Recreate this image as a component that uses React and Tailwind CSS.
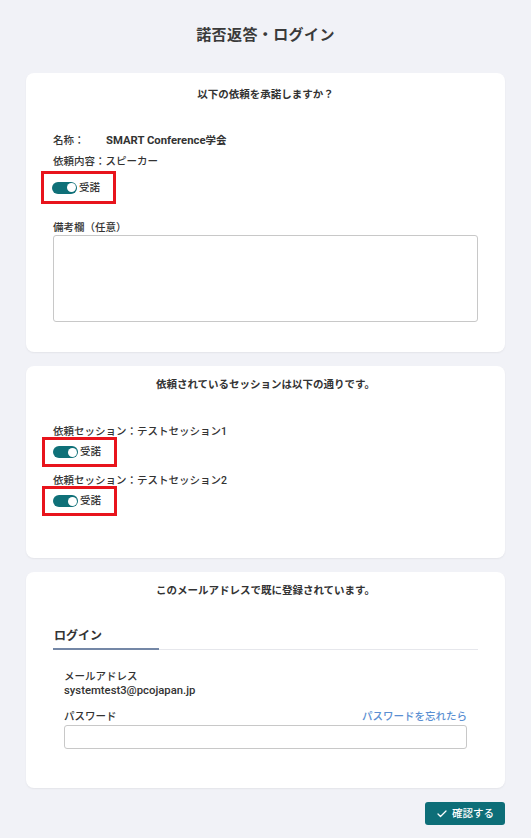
import React from "react";

const font = { fontFamily: "Roboto, 'Noto Sans CJK JP', sans-serif" };

const Toggle = ({ label, className = "" }) => (
  <div
    className={
      "w-[75px] border-[3px] border-[#e8141c] flex items-center pl-[8px] " +
      className
    }
  >
    <span className="relative w-[25px] h-[12px] rounded-full bg-[#0f7078]">
      <span className="absolute right-[1px] top-[1.5px] w-[9px] h-[9px] rounded-full bg-white" />
    </span>
    <span className="ml-[2px] text-[10.5px] font-medium text-[#333]">{label}</span>
  </div>
);

const Card = ({ children, className = "" }) => (
  <div className={"bg-white rounded-lg shadow-[0_1px_2px_rgba(0,0,0,0.06)] px-[27px] " + className}>
    {children}
  </div>
);

export default function App() {
  return (
    <div className="min-h-[838px] bg-[#f1f2f7] px-[26px] pb-[13px] text-[#333]" style={font}>
      <h1 className="pt-[24px] h-[73px] text-center text-[15px] font-bold text-[#3a3a3a] tracking-[0.4px]">
        諾否返答・ログイン
      </h1>

      <Card className="pt-[15px] pb-[30px] h-[279px]">
        <p className="text-center text-[10.5px] font-bold leading-[14px]">以下の依頼を承諾しますか？</p>
        <div className="mt-[31px] flex items-center text-[10.5px] font-medium leading-[16px]">
          <span className="w-[53px]">名称：</span>
          <span className="font-bold text-[11.3px]">SMART Conference<span className="text-[10.5px]">学会</span></span>
        </div>
        <p className="mt-[5px] text-[10.5px] font-medium leading-[16px]">依頼内容：スピーカー</p>
        <Toggle label="受諾" className="mt-[1px] -ml-[12px] h-[33px]" />
        <p className="mt-[16px] text-[10.5px] font-medium leading-[15px]">備考欄（任意）</p>
        <textarea className="block w-full h-[87px] border border-[#c8c8c8] rounded-[3px] resize-none" />
      </Card>

      <Card className="mt-[14px] pt-[12px] h-[192px]">
        <p className="text-center text-[10.5px] font-bold leading-[14px]">依頼されているセッションは以下の通りです。</p>
        <p className="mt-[32px] text-[10.5px] font-medium leading-[16px]">依頼セッション：テストセッション1</p>
        <Toggle label="受諾" className="-mt-[3px] -ml-[11px] h-[30px]" />
        <p className="mt-[6px] text-[10.5px] font-medium leading-[16px]">依頼セッション：テストセッション2</p>
        <Toggle label="受諾" className="-mt-[3px] -ml-[11px] h-[30px]" />
      </Card>

      <Card className="mt-[14px] pt-[12px] h-[216px]">
        <p className="text-center text-[10.5px] font-bold leading-[14px]">このメールアドレスで既に登録されています。</p>
        <div className="mt-[30px] flex border-b border-[#e6e7ec]">
          <div className="w-[106px] pl-[1px] pb-[4px] border-b-2 border-[#7487a6] -mb-px text-[12px] font-bold leading-[16px]">
            ログイン
          </div>
        </div>
        <div className="px-[11px]">
          <p className="mt-[20px] text-[10.5px] font-medium leading-[14px]">メールアドレス</p>
          <p className="text-[11.3px] font-medium leading-[14px]">systemtest3@pcojapan.jp</p>
          <div className="mt-[12px] flex justify-between text-[10.5px] font-medium leading-[14px]">
            <span>パスワード</span>
            <span className="text-[#5a8fd2]">パスワードを忘れたら</span>
          </div>
          <input className="mt-[1px] block w-full h-[24px] border border-[#c8c8c8] rounded-[3px]" />
        </div>
      </Card>

      <div className="mt-[14px] flex justify-end">
        <button className="w-[80px] h-[23px] rounded-[3px] bg-[#0d6e78] text-white text-[10.5px] font-medium flex items-center justify-center gap-[4px]">
          <svg width="12" height="12" viewBox="0 0 24 24" fill="none" stroke="white" strokeWidth="2.5" strokeLinecap="round" strokeLinejoin="round">
            <path d="M4 12l5 5L20 6" />
          </svg>
          確認する
        </button>
      </div>
    </div>
  );
}
